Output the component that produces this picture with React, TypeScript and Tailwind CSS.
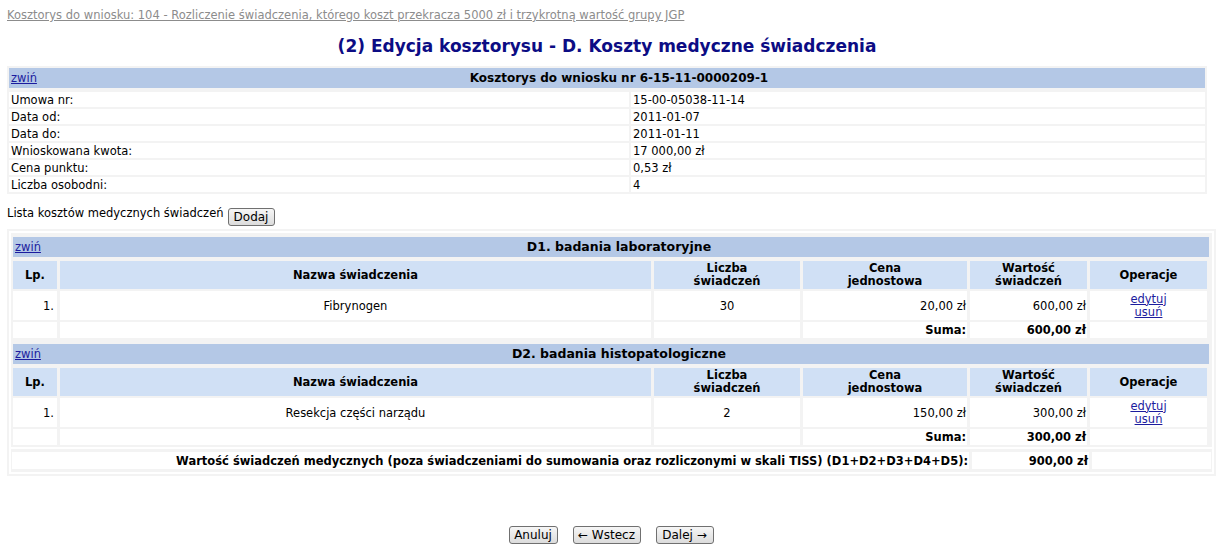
import React from 'react'

const link = 'text-[#1c1c9e] underline'
const cols = 'grid grid-cols-[44px_591px_146px_164px_117px_117px] gap-x-[3px]'

const info = [
  ['Umowa nr:', '15-00-05038-11-14'],
  ['Data od:', '2011-01-07'],
  ['Data do:', '2011-01-11'],
  ['Wnioskowana kwota:', '17 000,00 zł'],
  ['Cena punktu:', '0,53 zł'],
  ['Liczba osobodni:', '4'],
]

type Section = {
  title: string
  name: string
  count: string
  price: string
  value: string
}

const sections: Section[] = [
  { title: 'D1. badania laboratoryjne', name: 'Fibrynogen', count: '30', price: '20,00 zł', value: '600,00 zł' },
  { title: 'D2. badania histopatologiczne', name: 'Resekcja części narządu', count: '2', price: '150,00 zł', value: '300,00 zł' },
]

function Btn({ label, w }: { label: string; w: string }) {
  return (
    <button
      className={`${w} h-[18px] flex items-center justify-center border border-[#707070] rounded-[3px] bg-gradient-to-b from-[#f6f6f6] to-[#dcdcdc] text-[12px] leading-none text-black`}
    >
      {label}
    </button>
  )
}

function CostSection({ s }: { s: Section }) {
  return (
    <div className="flex flex-col">
      <div className="h-[20px] bg-[#b4c8e6] flex items-center">
        <div className="w-[26px] pl-[2px]">
          <a className={link}>zwiń</a>
        </div>
        <div className="flex-1 text-center font-bold text-[12.5px] pr-[10px]">{s.title}</div>
      </div>
      <div className={`${cols} mt-[4px] h-[28px] font-bold`}>
        <div className="bg-[#d0e0f5] flex items-center justify-center">Lp.</div>
        <div className="bg-[#d0e0f5] flex items-center justify-center">Nazwa świadczenia</div>
        <div className="bg-[#d0e0f5] flex items-center justify-center text-center leading-[13px]">Liczba<br />świadczeń</div>
        <div className="bg-[#d0e0f5] flex items-center justify-center text-center leading-[13px]">Cena<br />jednostowa</div>
        <div className="bg-[#d0e0f5] flex items-center justify-center text-center leading-[13px]">Wartość<br />świadczeń</div>
        <div className="bg-[#d0e0f5] flex items-center justify-center">Operacje</div>
      </div>
      <div className={`${cols} mt-[2px] h-[29px]`}>
        <div className="bg-white flex items-center justify-end pr-[3px]">1.</div>
        <div className="bg-white flex items-center justify-center">{s.name}</div>
        <div className="bg-white flex items-center justify-center">{s.count}</div>
        <div className="bg-white flex items-center justify-end pr-[1px]">{s.price}</div>
        <div className="bg-white flex items-center justify-end pr-[1px]">{s.value}</div>
        <div className="bg-white flex flex-col items-center justify-center leading-[13px]">
          <a className={link}>edytuj</a>
          <a className={link}>usuń</a>
        </div>
      </div>
      <div className={`${cols} mt-[2px] h-[16px] font-bold`}>
        <div className="bg-white" />
        <div className="bg-white" />
        <div className="bg-white" />
        <div className="bg-white flex items-center justify-end pr-[1px]">Suma:</div>
        <div className="bg-white flex items-center justify-end pr-[1px]">{s.value}</div>
        <div className="bg-white" />
      </div>
    </div>
  )
}

export default function App() {
  return (
    <div className="w-[1224px] h-[553px] bg-white text-black text-[11.5px] leading-[14px] font-['DejaVu_Sans',sans-serif] pl-[7px] pt-[8px]">
      <div className="text-[#8c8c8c] underline">
        Kosztorys do wniosku: 104 - Rozliczenie świadczenia, którego koszt przekracza 5000 zł i trzykrotną wartość grupy JGP
      </div>

      <h1 className="w-[1200px] mt-[14px] text-center text-[17px] leading-[20px] font-bold text-[#0c0c84]">
        (2) Edycja kosztorysu - D. Koszty medyczne świadczenia
      </h1>

      <div className="w-[1200px] mt-[10px] bg-[#f3f3f3] p-[2px]">
        <div className="h-[20px] bg-[#b4c8e6] flex items-center">
          <div className="w-[26px] pl-[2px]">
            <a className={link}>zwiń</a>
          </div>
          <div className="flex-1 text-center font-bold text-[12px] pr-[2px]">Kosztorys do wniosku nr 6-15-11-0000209-1</div>
        </div>
        <div className="mt-[4px] flex flex-col gap-[2px]">
          {info.map(([k, v]) => (
            <div key={k} className="grid grid-cols-[620px_574px] gap-x-[2px] h-[15px]">
              <div className="bg-white pl-[2px] flex items-center">{k}</div>
              <div className="bg-white pl-[2px] flex items-center">{v}</div>
            </div>
          ))}
        </div>
      </div>

      <div className="mt-[12px] flex items-start">
        <span>Lista kosztów medycznych świadczeń</span>
        <div className="ml-[4px] mt-[2px]">
          <Btn label="Dodaj" w="w-[47px]" />
        </div>
      </div>

      <div className="w-[1209px] mt-[3px] border-2 border-[#f3f3f3] p-[2px]">
        <div className="bg-[#f3f3f3] pl-[2px] pr-[3px] pt-[4px] pb-[2px] flex flex-col gap-[6px]">
          {sections.map((s) => (
            <CostSection key={s.title} s={s} />
          ))}
        </div>
        <div className="mt-[2px] bg-[#f3f3f3] px-[1px] py-[3px]">
          <div className="grid grid-cols-[957px_117px_119px] gap-x-[3px] h-[17px] font-bold">
            <div className="bg-white flex items-center justify-end pr-[1px]">
              Wartość świadczeń medycznych (poza świadczeniami do sumowania oraz rozliczonymi w skali TISS) (D1+D2+D3+D4+D5):
            </div>
            <div className="bg-white flex items-center justify-end pr-[1px]">900,00 zł</div>
            <div className="bg-white" />
          </div>
        </div>
      </div>

      <div className="w-[1214px] mt-[50px] flex justify-center gap-[15px] pr-[6px]">
        <Btn label="Anuluj" w="w-[49px]" />
        <Btn label="← Wstecz" w="w-[68px]" />
        <Btn label="Dalej →" w="w-[58px]" />
      </div>
    </div>
  )
}
